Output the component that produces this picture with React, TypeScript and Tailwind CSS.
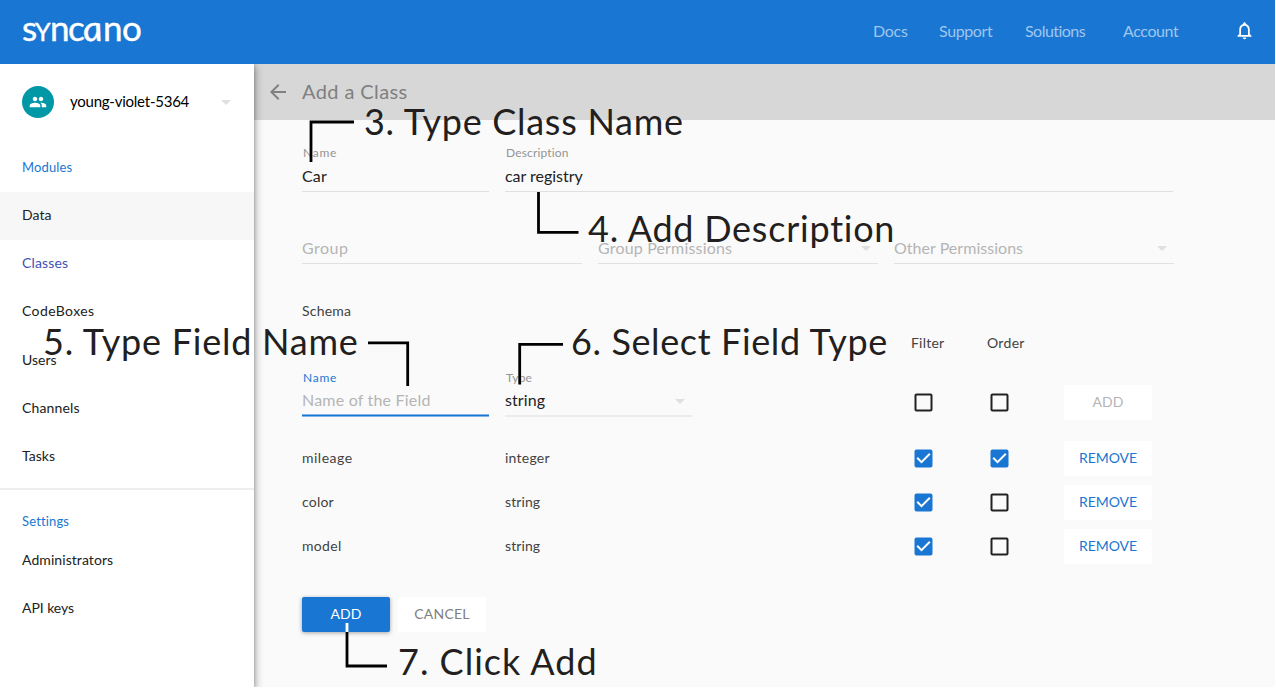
import type { ReactNode } from 'react';
import {
  MdArrowBack,
  MdArrowDropDown,
  MdCheckBox,
  MdCheckBoxOutlineBlank,
  MdNotificationsNone,
  MdPeople,
} from 'react-icons/md';

function Logo() {
  return (
    <div className="mb-[10px] flex h-[34px] items-baseline text-[35px] leading-[34px] text-white [-webkit-text-stroke:0.4px_white]">
      <span className="w-[13px]">s</span>
      <span className="w-[15px] text-[25px]">Y</span>
      <span className="w-[18px]">n</span>
      <span className="w-[15px]">c</span>
      <span className="w-[20px] scale-x-110 skew-x-[9deg] italic">a</span>
      <span className="w-[19px]">n</span>
      <span className="w-[20px]">o</span>
    </div>
  );
}

function SideItem({ children, className = '' }: { children: ReactNode; className?: string }) {
  return <div className={`flex h-12 items-center pl-[22px] text-[14px] ${className}`}>{children}</div>;
}

interface FieldProps {
  label?: ReactNode;
  value: ReactNode;
  className: string;
  dropdown?: boolean;
}

function Field({ label, value, className, dropdown }: FieldProps) {
  return (
    <div className={`flex h-[72px] flex-col justify-end border-b border-[#e0e0e0] text-[16px] ${className}`}>
      <div className="h-4 pl-px text-[12px] leading-4 text-[#949494]">{label}</div>
      <div className="flex h-[30px] items-center justify-between">
        {value}
        {dropdown && <MdArrowDropDown className="size-6 text-[#e0e0e0]" />}
      </div>
    </div>
  );
}

function Check({ on }: { on?: boolean }) {
  return on ? (
    <MdCheckBox className="size-6 translate-[0.5px] text-[#1976d2]" />
  ) : (
    <MdCheckBoxOutlineBlank className="size-6 translate-[0.5px] text-[#212121]" />
  );
}

const columns = 'grid grid-cols-[203px_406px_76px_77px_88px]';

function SchemaRow({ name, type, order }: { name: ReactNode; type: ReactNode; order?: boolean }) {
  return (
    <div className={`${columns} h-11 items-center text-[14px] text-[#424242]`}>
      <div className="pb-[2px]">{name}</div>
      <div className="pb-[2px]">{type}</div>
      <Check on />
      <Check on={order} />
      <div className="flex h-[35px] items-center justify-center bg-white pb-[2px] tracking-[-0.05px] text-[#1976d2]">REMOVE</div>
    </div>
  );
}

function Note({ className, children }: { className: string; children: ReactNode }) {
  return (
    <div className={`absolute text-[36px] leading-[44px] whitespace-nowrap text-[#231f20] ${className}`}>{children}</div>
  );
}

export default function App() {
  return (
    <div className="h-[689px] w-[1276px] overflow-hidden bg-white font-['Lato',sans-serif]">
      <div className="relative flex h-[687px] w-[1275px] flex-col bg-[#fafafa]">
        <header className="flex h-16 shrink-0 items-center bg-[#1976d2] pl-[22px] text-[16px] text-[#9fc6ee]">
          <Logo />
          <nav className="mb-[2px] ml-[731px] flex items-center">
            <span className="w-[66px] tracking-[-0.26px]">Docs</span>
            <span className="w-[86px] tracking-[-0.38px]">Support</span>
            <span className="w-[98px] tracking-[-0.53px]">Solutions</span>
            <span className="w-[111px] tracking-[-0.4px]">Account</span>
          </nav>
          <MdNotificationsNone className="mb-[3px] size-[21px] text-white" />
        </header>

        <div className="flex min-h-0 flex-1">
          <aside className="z-10 w-[254px] shrink-0 bg-white text-[#212121] shadow-[3px_3px_7px_rgba(0,0,0,0.22),1px_0_3px_rgba(0,0,0,0.18)] [clip-path:inset(0_-14px_0_0)]">
            <div className="flex h-[76px] items-center pr-4 pl-[22px]">
              <div className="flex size-8 items-center justify-center rounded-full bg-[#0097a7]">
                <MdPeople className="size-[18px] text-white" />
              </div>
              <span className="ml-4 flex-1 pb-px text-[15px] tracking-[-0.24px] text-black">young-violet-5364</span>
              <MdArrowDropDown className="size-6 text-[#e0e0e0]" />
            </div>
            <div className="mt-1 flex h-12 items-center pl-[22px] text-[13px] tracking-[0.13px] text-[#1976d2]">Modules</div>
            <SideItem className="bg-[#f7f7f7] pb-[3px] tracking-[0.05px]">Data</SideItem>
            <SideItem className="pb-[3px] tracking-[0.15px] text-[#3f51b5]">Classes</SideItem>
            <SideItem className="pb-[3px] tracking-[0.4px]">CodeBoxes</SideItem>
            <SideItem className="pb-[2px] tracking-[0.01px]">Users</SideItem>
            <SideItem className="pb-[2px] tracking-[0.15px]">Channels</SideItem>
            <SideItem className="pb-[2px] tracking-[0.05px]">Tasks</SideItem>
            <div className="mt-2 h-[2px] bg-[#eeeeee]" />
            <div className="mt-[19px] flex h-[26px] items-center pl-[22px] text-[13px] tracking-[0.15px] text-[#1976d2]">Settings</div>
            <SideItem className="tracking-[0.07px]">Administrators</SideItem>
            <SideItem className="tracking-[-0.06px]">API keys</SideItem>
          </aside>

          <main className="flex-1">
            <div className="flex h-14 items-center bg-[#d7d7d7] pl-3 text-[#808080]">
              <MdArrowBack className="size-6" />
              <h1 className="ml-3 pb-[2px] text-[20px] font-normal tracking-[0.4px]">Add a Class</h1>
            </div>

            <div className="pl-12">
              <div className="flex gap-4 text-[#212121]">
                <Field
                  className="w-[187px]"
                  label={<span className="tracking-[0.73px]">Name</span>}
                  value={<span className="tracking-[0.18px]">Car</span>}
                />
                <Field
                  className="w-[668px]"
                  label={<span className="tracking-[0.15px]">Description</span>}
                  value={<span className="tracking-[-0.02px]">car registry</span>}
                />
              </div>
              <div className="flex gap-4 text-[#b5b5b5]">
                <Field className="w-[280px]" value={<span className="tracking-[0.49px]">Group</span>} />
                <Field className="w-[280px]" dropdown value={<span className="tracking-[0.17px]">Group Permissions</span>} />
                <Field className="w-[280px]" dropdown value={<span className="tracking-[0.03px]">Other Permissions</span>} />
              </div>

              <div className="mt-[37px] h-5 text-[14px] leading-5 tracking-[0.21px] text-[#424242]">Schema</div>
              <div className={`${columns} mt-3 h-5 text-[14px] leading-5 text-[#424242]`}>
                <span className="col-start-3 tracking-[0.21px]">Filter</span>
                <span className="tracking-[0.3px]">Order</span>
              </div>

              <div className={`${columns} mt-4 h-[67px] text-[16px]`}>
                <div className="w-[187px]">
                  <div className="h-[17px] pl-px text-[12px] leading-[17px] tracking-[0.73px] text-[#1976d2]">Name</div>
                  <div className="flex h-7 items-center tracking-[0.2px] text-[#b5b5b5]">Name of the Field</div>
                  <div className="h-[3px] border-y border-[#82b4e6] bg-[#1976d2]" />
                </div>
                <div className="w-[187px]">
                  <div className="h-[17px] pl-px text-[12px] leading-[17px] tracking-[0.21px] text-[#949494]">Type</div>
                  <div className="flex h-7 items-center justify-between text-[#212121]">
                    <span className="tracking-[0.1px]">string</span>
                    <MdArrowDropDown className="mt-[2px] size-6 text-[#e0e0e0]" />
                  </div>
                  <div className="mt-px h-[2px] bg-[#ececec]" />
                </div>
                <div className="pt-[21px]"><Check /></div>
                <div className="pt-[21px]"><Check /></div>
                <div className="mt-4 flex h-[35px] items-center justify-center bg-white pb-[2px] text-[14px] text-[#b5b5b5]">ADD</div>
              </div>

              <SchemaRow name={<span className="tracking-[0.5px]">mileage</span>} type={<span className="tracking-[0.25px]">integer</span>} order />
              <SchemaRow name={<span className="tracking-[0.2px]">color</span>} type={<span className="tracking-[0.1px]">string</span>} />
              <SchemaRow name={<span className="tracking-[0.3px]">model</span>} type={<span className="tracking-[0.1px]">string</span>} />

              <div className="mt-[29px] flex gap-2 text-[14px]">
                <div className="flex h-[35px] w-[88px] items-center justify-center rounded-[2px] bg-[#1976d2] pb-[2px] text-white shadow-[0_1px_4px_rgba(0,0,0,0.35)]">ADD</div>
                <div className="flex h-[35px] w-[88px] items-center justify-center bg-white pb-[2px] tracking-[0.21px] text-[#808080]">CANCEL</div>
              </div>
            </div>
          </main>
        </div>

        <div className="absolute inset-0 z-20">
          <svg className="absolute inset-0" width="1275" height="687" fill="none" stroke="#000" strokeWidth="2.8">
            <path d="M354 122H311V162" />
            <path d="M538.5 192V232.4H578.5" />
            <path d="M368 342.8H407.7V386" />
            <path d="M563 344.4H519.7V384.5" />
            <path d="M347 632V666H387" />
            <path d="M347 623V632" stroke="#fff" />
          </svg>
          <Note className="top-[99px] left-[364px] tracking-[0.71px]">3. Type Class Name</Note>
          <Note className="top-[206px] left-[588px] tracking-[0.76px]">4. Add Description</Note>
          <Note className="top-[319px] left-[43px] tracking-[0.76px]">5. Type Field Name</Note>
          <Note className="top-[319px] left-[571px] tracking-[0.62px]">6. Select Field Type</Note>
          <Note className="top-[639px] left-[398px] tracking-[1px]">7. Click Add</Note>
        </div>
      </div>
    </div>
  );
}
